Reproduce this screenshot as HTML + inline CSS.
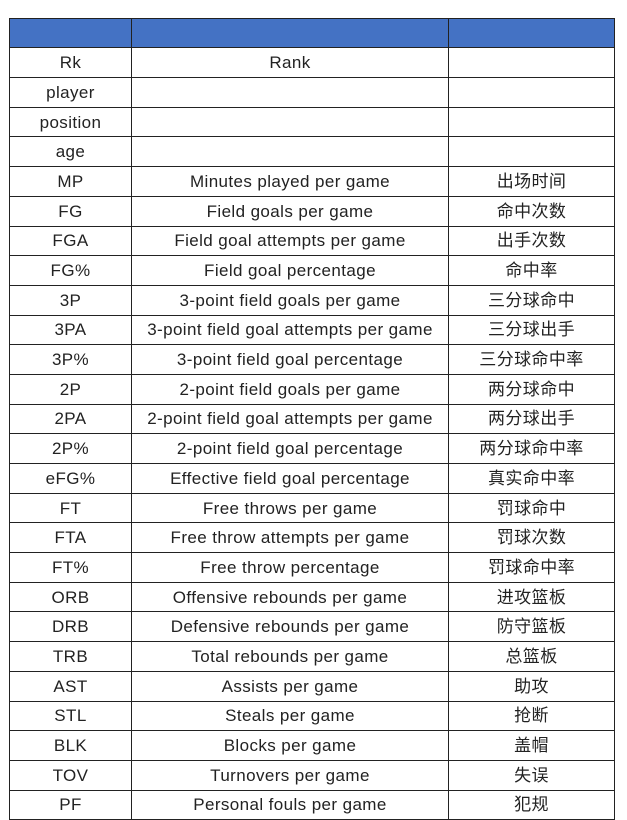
<!DOCTYPE html>
<html><head><meta charset="utf-8"><style>
body{margin:0;width:627px;height:818px;overflow:hidden;background:#fff;font-family:"Liberation Sans","Noto Sans CJK SC",sans-serif;}
table{position:absolute;left:9px;top:18px;border-collapse:collapse;table-layout:fixed;width:605px;}
td{border:1.3px solid #222;height:28.7px;padding:0;text-align:center;font-size:17px;letter-spacing:0.4px;color:#222;white-space:nowrap;line-height:17px;}
tr.h td{background:#4472c4;height:28.4px;}
</style></head><body>
<table>
<colgroup><col style="width:122px"><col style="width:317px"><col style="width:166px"></colgroup>
<tr class="h"><td></td><td></td><td></td></tr>
<tr><td>Rk</td><td>Rank</td><td></td></tr>
<tr><td>player</td><td></td><td></td></tr>
<tr><td>position</td><td></td><td></td></tr>
<tr><td>age</td><td></td><td></td></tr>
<tr><td>MP</td><td>Minutes played per game</td><td>出场时间</td></tr>
<tr><td>FG</td><td>Field goals per game</td><td>命中次数</td></tr>
<tr><td>FGA</td><td>Field goal attempts per game</td><td>出手次数</td></tr>
<tr><td>FG%</td><td>Field goal percentage</td><td>命中率</td></tr>
<tr><td>3P</td><td>3-point field goals per game</td><td>三分球命中</td></tr>
<tr><td>3PA</td><td>3-point field goal attempts per game</td><td>三分球出手</td></tr>
<tr><td>3P%</td><td>3-point field goal percentage</td><td>三分球命中率</td></tr>
<tr><td>2P</td><td>2-point field goals per game</td><td>两分球命中</td></tr>
<tr><td>2PA</td><td>2-point field goal attempts per game</td><td>两分球出手</td></tr>
<tr><td>2P%</td><td>2-point field goal percentage</td><td>两分球命中率</td></tr>
<tr><td>eFG%</td><td>Effective field goal percentage</td><td>真实命中率</td></tr>
<tr><td>FT</td><td>Free throws per game</td><td>罚球命中</td></tr>
<tr><td>FTA</td><td>Free throw attempts per game</td><td>罚球次数</td></tr>
<tr><td>FT%</td><td>Free throw percentage</td><td>罚球命中率</td></tr>
<tr><td>ORB</td><td>Offensive rebounds per game</td><td>进攻篮板</td></tr>
<tr><td>DRB</td><td>Defensive rebounds per game</td><td>防守篮板</td></tr>
<tr><td>TRB</td><td>Total rebounds per game</td><td>总篮板</td></tr>
<tr><td>AST</td><td>Assists per game</td><td>助攻</td></tr>
<tr><td>STL</td><td>Steals per game</td><td>抢断</td></tr>
<tr><td>BLK</td><td>Blocks per game</td><td>盖帽</td></tr>
<tr><td>TOV</td><td>Turnovers per game</td><td>失误</td></tr>
<tr><td>PF</td><td>Personal fouls per game</td><td>犯规</td></tr>
</table>
</body></html>
